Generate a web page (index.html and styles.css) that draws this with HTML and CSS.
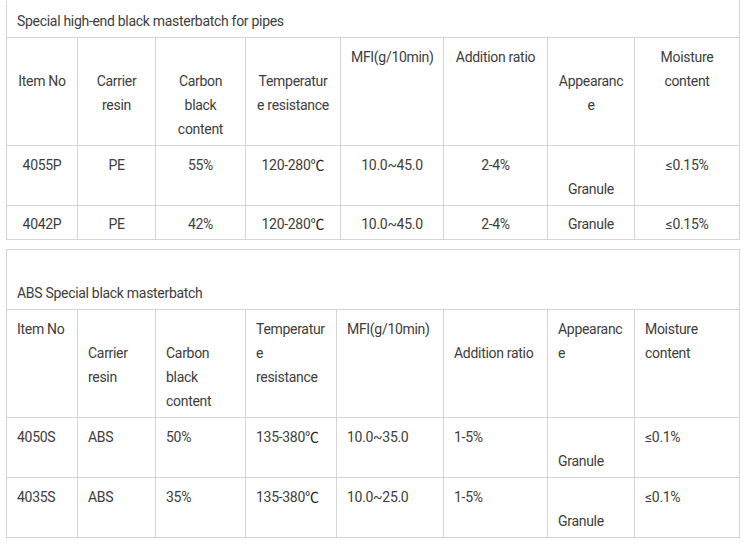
FILE: index.html
```html
<!DOCTYPE html>
<html>
<head>
<meta charset="utf-8">
<link rel="stylesheet" href="styles.css">
</head>
<body>
<div class="page">
<table class="spec spec-center">
  <colgroup>
    <col class="w1"><col class="w2"><col class="w3"><col class="w4a"><col class="w5a"><col class="w6"><col class="w7"><col class="w8">
  </colgroup>
  <tr><td class="title first" colspan="8">Special high-end black masterbatch for pipes</td></tr>
  <tr class="head">
    <td class="s1">Item No</td>
    <td class="s1">Carrier<br>resin</td>
    <td class="s1">Carbon<br>black<br>content</td>
    <td class="s1">Temperatur<br>e resistance</td>
    <td>MFI(g/10min)</td>
    <td>Addition ratio</td>
    <td class="s1">Appearanc<br>e</td>
    <td>Moisture<br>content</td>
  </tr>
  <tr>
    <td>4055P</td><td>PE</td><td>55%</td><td>120-280<span class="deg">℃</span></td><td>10.0~45.0</td><td>2-4%</td><td class="s1">Granule</td><td>≤0.15%</td>
  </tr>
  <tr class="short">
    <td>4042P</td><td>PE</td><td>42%</td><td>120-280<span class="deg">℃</span></td><td>10.0~45.0</td><td>2-4%</td><td>Granule</td><td>≤0.15%</td>
  </tr>
</table>

<table class="spec spec-left">
  <colgroup>
    <col class="w1"><col class="w2"><col class="w3"><col class="w4b"><col class="w5b"><col class="w6"><col class="w7"><col class="w8">
  </colgroup>
  <tr><td class="title s1" colspan="8">ABS Special black masterbatch</td></tr>
  <tr class="head">
    <td>Item No</td>
    <td class="s1">Carrier<br>resin</td>
    <td class="s1">Carbon<br>black<br>content</td>
    <td>Temperatur<br>e<br>resistance</td>
    <td>MFI(g/10min)</td>
    <td class="s1">Addition ratio</td>
    <td>Appearanc<br>e</td>
    <td>Moisture<br>content</td>
  </tr>
  <tr>
    <td>4050S</td><td>ABS</td><td>50%</td><td>135-380<span class="deg">℃</span></td><td>10.0~35.0</td><td>1-5%</td><td class="s1">Granule</td><td>≤0.1%</td>
  </tr>
  <tr>
    <td>4035S</td><td>ABS</td><td>35%</td><td>135-380<span class="deg">℃</span></td><td>10.0~25.0</td><td>1-5%</td><td class="s1">Granule</td><td>≤0.1%</td>
  </tr>
</table>
</div>
</body>
</html>
```

FILE: styles.css
```css
html, body {
  margin: 0;
  padding: 0;
  background: #ffffff;
}

.page {
  padding: 0 0 0 6px;
  font-family: Roboto, "Liberation Sans", Arial, sans-serif;
  font-size: 14px;
  line-height: 24px;
  letter-spacing: -0.3px;
  color: #3d3d3d;
}

.spec {
  width: 734px;
  table-layout: fixed;
  border-collapse: collapse;
  border: 1px solid #d4d4d4;
  margin-bottom: 9px;
}

.spec td {
  border: 1px solid #d4d4d4;
  padding: 7px 10px 4px;
  vertical-align: top;
  white-space: nowrap;
}

.spec tr.short td {
  padding-top: 6px;
  padding-bottom: 3px;
}

.spec-center td {
  text-align: center;
}

.spec-left td {
  text-align: left;
}

.spec td.title {
  text-align: left;
}

.spec td.title.first {
  padding-top: 8px;
  border-top-color: #ffffff;
}

.spec td.s1 {
  padding-top: 31px;
}

.deg {
  font-family: "Noto Sans CJK SC", "DejaVu Sans", sans-serif;
  font-size: 14px;
  line-height: 0;
  color: #222222;
  letter-spacing: 0;
}

.w1 { width: 71px; }
.w2 { width: 78px; }
.w3 { width: 90px; }
.w4a { width: 95px; }
.w5a { width: 103px; }
.w4b { width: 91px; }
.w5b { width: 107px; }
.w6 { width: 104px; }
.w7 { width: 87px; }
.w8 { width: 105px; }
```
